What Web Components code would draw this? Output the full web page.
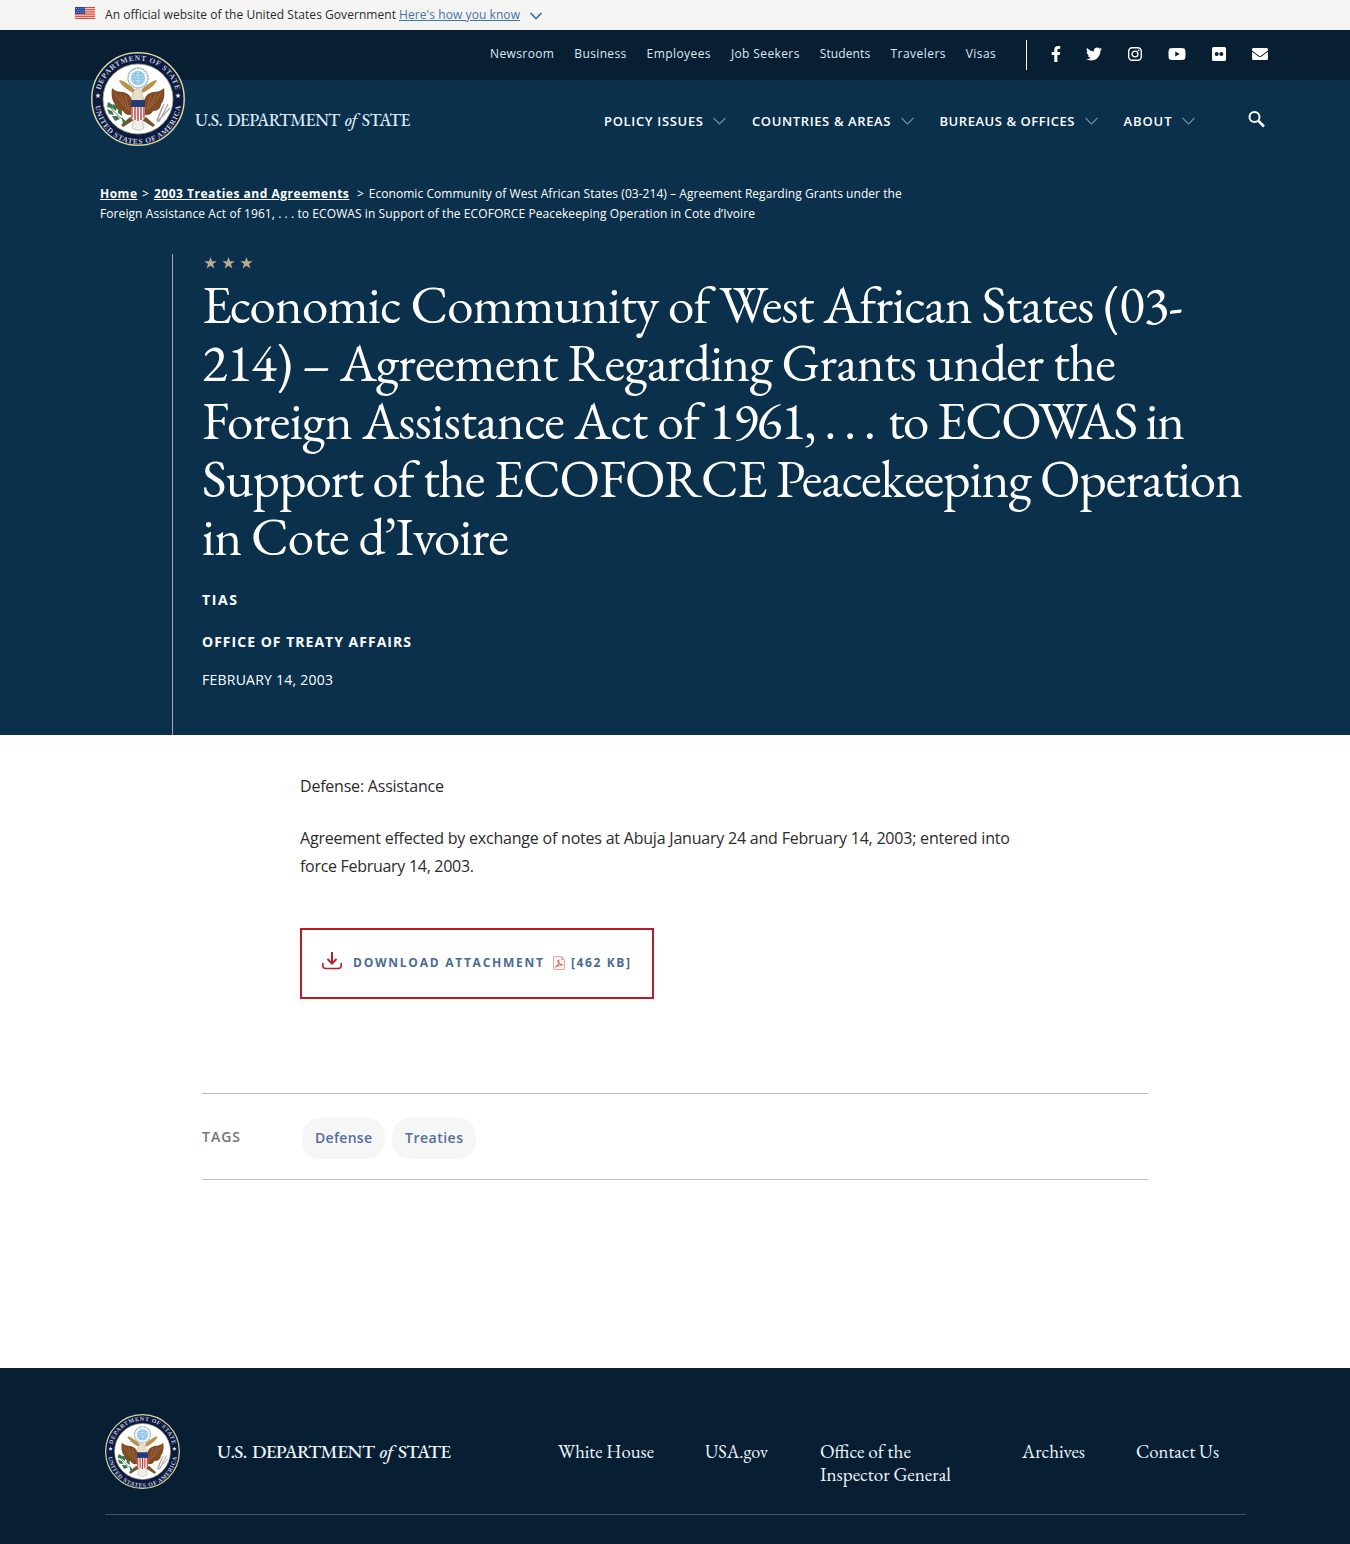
<!DOCTYPE html>
<html lang="en"><head><meta charset="utf-8"><title>Economic Community of West African States (03-214)</title>
<style>
body{margin:0;background:#fff;font-family:"Open Sans","Noto Sans",sans-serif;color:#2b2b2b}
</style></head><body><state-page></state-page>
<script>
const define=(name,html)=>customElements.define(name,class extends HTMLElement{
  constructor(){super();this.attachShadow({mode:'open'}).innerHTML=html}
});

define('gov-banner',`<style>
:host{display:flex;align-items:center;height:30px;background:#f4f4f3;padding-left:75px;font-size:12px;line-height:30px;box-sizing:border-box}
.flag{width:20px;height:12px;margin:-5px 10px 0 0}
a{color:#4773a5;margin-left:3px}a fit-text{text-decoration:underline}
.c{margin:2px 0 0 9px}
</style>
<svg class="flag" viewBox="0 0 20 12"><path fill="#f7ded9" d="M0 0h20v12H0z"/><path stroke="#dc4537" stroke-width="1" d="M0 .5h20M0 2.4h20M0 4.2h20M0 6h20M0 7.8h20M0 9.6h20M0 11.5h20"/><path fill="#2a479d" d="M0 0h10v7H0z"/><path stroke="#9eaede" stroke-width=".8" stroke-dasharray="1 1.2" d="M1 1.5h8M2 3.5h8M1 5.5h8"/></svg>
<fit-text width="291">An official website of the United States Government</fit-text><a href="#"><fit-text width="121">Here's how you know</fit-text></a>
<svg class="c" width="14" height="9" viewBox="0 0 14 9" fill="none" stroke="#3c6898" stroke-width="1.6"><path d="M1.500 1 7 6.500 12.500 1"/></svg>`);

define('dept-seal',`<style>:host{display:block}svg{display:block;width:100%;height:100%}text{font-family:"Liberation Serif",serif;font-weight:bold;font-size:8px;fill:#c3cadb}</style>
<svg viewBox="0 0 94 94">
<defs><path id="up" d="M8.500 47a38.500 38.500 0 0 1 77 0"/><path id="dn" d="M4 49a43 43 0 0 0 86 0"/></defs>
<circle cx="47" cy="47" r="46.200" fill="#0c1c40" stroke="#d8d2a0" stroke-width="1.500"/>
<circle cx="47" cy="47" r="35" fill="#fff" stroke="#a8a681" stroke-width=".8"/>
<text style="font-size:7.500px"><textPath href="#up" startOffset="9" textLength="103">DEPARTMENT OF STATE</textPath></text>
<text style="font-size:7.500px"><textPath href="#dn" startOffset="5" textLength="125">UNITED STATES OF AMERICA</textPath></text>
<path fill="#e8e6cf" d="m7 41 .8 1.700 1.900.1-1.500 1.200.5 1.900L7 45l-1.700.9.5-1.900-1.500-1.200 1.900-.1zM87 41l.8 1.700 1.900.1-1.500 1.200.5 1.900L87 45l-1.700.9.5-1.900-1.500-1.200 1.900-.1z"/>
<circle cx="47" cy="26" r="10" fill="#eef6fb" stroke="#9ba9b5" stroke-width="1.400" stroke-dasharray="2 .7"/>
<circle cx="47" cy="26" r="7" fill="#8ec4e6"/><path stroke="#e9f6fc" stroke-width="1.100" stroke-dasharray="1.300 1.500" d="M42 23h10M40.500 26h13M42 29h10M47 20v12"/>
<path fill="#b9914d" d="M29 28c6 2 11 6 15 10l-2 3c-5-3-10-6-14-12zM65 28c-6 2-11 6-15 10l2 3c5-3 10-6 14-12z"/>
<path fill="#824b24" d="M21 36c3 3 7 4 11 4 5 1 8 4 9 9l1 13c-4 2-8 1-10-3-5 0-8-3-8-7-3-3-4-9-3-16zM73 36c-3 3-7 4-11 4-5 1-8 4-9 9l-1 13c4 2 8 1 10-3 5 0 8-3 8-7 3-3 4-9 3-16z"/>
<path fill="none" stroke="#ba895a" stroke-width=".5" d="M24 41l9 13M29 42l7 15M34 43l4 15M70 41l-9 13M65 42l-7 15M60 43l-4 15"/>
<path fill="#e9dfc9" stroke="#a79b82" stroke-width=".5" d="m41 41 4-4c4 0 6 3 6 6l2 4c-4 3-9 3-13 0l2-5z"/>
<path fill="#75532f" d="m39 65-9 8 2 2 11-7zM55 65l9 8-2 2-11-7z"/>
<path fill="#f1eee7" stroke="#999" stroke-width=".5" d="m43 67-2 9c4 3 8 3 12 0l-2-9z"/>
<path fill="#f8f1ed" d="M40 49h14v15c0 3-4 6-7 6s-7-3-7-6z"/><path stroke="#be3337" stroke-width="1.300" d="M41 54v12M44 54v14M47 54v15M50 54v14M53 54v12"/><path fill="#253b77" d="M40 48h14v7H40z"/>
<path fill="none" stroke="#597c4a" d="M18 52c3 7 9 12 16 17"/><path fill="#39764a" d="m17 50-1 5 5 1 1-3zM22 52l4 2-1 5-4-3zM16 57l5 2 2 4-5-1zM27 57l4 2v5l-4-3zM21 64l5 0 3 3-5 2zM31 65l4 5-3 4z"/>
<path stroke="#a6a7a3" stroke-width="1.200" d="m77 52-9 18M73 52l-7 17M79 56l-13 14M71 56l-5 12"/>
</svg>`);

define('top-bar',`<style>
:host{display:flex;align-items:center;height:50px;background:#081f33;padding-left:490px;font-size:12px;color:#dfe7f1;line-height:48px;box-sizing:border-box}
nav{display:flex;gap:20.300px;margin-top:-3px}
.s{display:flex;align-items:center;border-left:1px solid #fff;height:30px;margin-left:30px;padding-left:24px}
svg{fill:#fff;display:block;margin-top:-2px}
</style>
<nav><fit-text width="64">Newsroom</fit-text><fit-text width="52">Business</fit-text><fit-text width="64">Employees</fit-text><fit-text width="68.500">Job Seekers</fit-text><fit-text width="50.500">Students</fit-text><fit-text width="55">Travelers</fit-text><fit-text width="30">Visas</fit-text></nav>
<div class="s">
<svg width="10" height="16" viewBox="0 0 320 512"><path d="M279.140 288l14.220-92.660h-88.910v-60.130c0-25.350 12.420-50.060 52.240-50.060h40.420V6.260S260.430 0 225.360 0c-73.220 0-121.080 44.380-121.080 124.720v70.620H22.890V288h81.390v224h100.170V288z"/></svg>
<svg style="margin-left:25px" width="16" height="16" viewBox="0 0 512 512"><path d="M459.370 151.716c.325 4.548.325 9.097.325 13.645 0 138.720-105.583 298.558-298.558 298.558-59.452 0-114.680-17.219-161.137-47.106 8.447.974 16.568 1.299 25.340 1.299 49.055 0 94.213-16.568 130.274-44.832-46.132-.975-84.792-31.188-98.112-72.772 6.498.974 12.995 1.624 19.818 1.624 9.421 0 18.843-1.300 27.614-3.573-48.081-9.747-84.143-51.980-84.143-102.985v-1.299c13.969 7.797 30.214 12.670 47.431 13.319-28.264-18.843-46.781-51.005-46.781-87.391 0-19.492 5.197-37.360 14.294-52.954 51.655 63.675 129.300 105.258 216.365 109.807-1.624-7.797-2.599-15.918-2.599-24.040 0-57.828 46.782-104.934 104.934-104.934 30.213 0 57.502 12.670 76.670 33.137 23.715-4.548 46.456-13.320 66.599-25.340-7.798 24.366-24.366 44.833-46.132 57.827 21.117-2.273 41.584-8.122 60.426-16.243-14.292 20.791-32.161 39.308-52.628 54.253z"/></svg>
<svg style="margin-left:25px" width="16" height="16" viewBox="0 0 16 16"><rect x="1.700" y="1.700" width="12.600" height="12.600" rx="3.500" fill="none" stroke="#fff" stroke-width="1.400"/><circle cx="8" cy="8" r="2.900" fill="none" stroke="#fff" stroke-width="1.400"/><circle cx="11.700" cy="4.300" r=".9"/></svg>
<svg style="margin-left:25px" width="18" height="16" viewBox="0 0 576 512"><path d="M549.655 124.083c-6.281-23.650-24.787-42.276-48.284-48.597C458.781 64 288 64 288 64S117.220 64 74.629 75.486c-23.497 6.322-42.003 24.947-48.284 48.597-11.412 42.867-11.412 132.305-11.412 132.305s0 89.438 11.412 132.305c6.281 23.650 24.787 41.500 48.284 47.821C117.220 448 288 448 288 448s170.780 0 213.371-11.486c23.497-6.321 42.003-24.171 48.284-47.821 11.412-42.867 11.412-132.305 11.412-132.305s0-89.438-11.412-132.305zm-317.510 213.508V175.185l142.739 81.205-142.739 81.201z"/></svg>
<svg style="margin-left:26px" width="14" height="14" viewBox="0 0 14 14"><rect width="14" height="14" rx="1.600"/><circle cx="4.700" cy="7" r="2" fill="#081f33"/><circle cx="9.300" cy="7" r="2" fill="#081f33"/></svg>
<svg style="margin-left:26px" width="16" height="16" viewBox="0 0 512 512"><path d="M502.300 190.800c3.900-3.100 9.700-.2 9.700 4.700V400c0 26.500-21.500 48-48 48H48c-26.500 0-48-21.500-48-48V195.600c0-5 5.700-7.800 9.700-4.700 22.400 17.400 52.100 39.500 154.100 113.600 21.100 15.400 56.700 47.800 92.200 47.600 35.700.3 72-32.800 92.300-47.600 102-74.100 131.600-96.300 154-113.700zM256 320c23.200.4 56.600-29.200 73.400-41.400 132.700-96.300 142.800-104.700 173.400-128.700 5.800-4.500 9.200-11.500 9.200-18.900v-19c0-26.500-21.500-48-48-48H48c-26.500 0-48 21.500-48 48v19c0 7.400 3.400 14.300 9.200 18.900 30.600 23.900 40.700 32.400 173.400 128.700 16.800 12.200 50.200 41.800 73.400 41.400z"/></svg>
</div>`);

define('nav-item',`<style>:host{display:flex;align-items:center;gap:10px}svg{display:block}</style><slot></slot><svg width="13" height="8" viewBox="0 0 13 8" fill="none" stroke="#6d91b2" stroke-width="1.100"><path d="m.5 1 6 6 6-6"/></svg>`);

define('main-nav',`<style>
:host{display:flex;height:82px;align-items:center;box-sizing:border-box;padding-left:195px;font-size:13px;font-weight:600;color:#fff;line-height:20px;position:relative}
dept-seal{position:absolute;left:91px;top:-28px;width:94px;height:94px}
nav{display:flex;gap:26px;margin-left:193.500px}
.name{font:500 17.500px/20px "EB Garamond","Liberation Serif",serif;color:#dce8f3;word-spacing:2px;margin-top:-2px}
.q{margin:-4px 0 0 53px}
</style>
<dept-seal></dept-seal><fit-text class="name" width="215.500">U.S. DEPARTMENT <i>of</i> STATE</fit-text>
<nav><nav-item><fit-text width="99">POLICY ISSUES</fit-text></nav-item><nav-item><fit-text width="138.500">COUNTRIES &amp; AREAS</fit-text></nav-item><nav-item><fit-text width="135">BUREAUS &amp; OFFICES</fit-text></nav-item><nav-item><fit-text width="48">ABOUT</fit-text></nav-item></nav>
<svg class="q" width="18" height="18" viewBox="0 0 18 18" fill="none" stroke="#fff"><circle cx="6.500" cy="7" r="5" stroke-width="2"/><path stroke-width="2.500" d="m10 10.500 6 6"/></svg>`);

define('page-hero',`<style>
:host{display:block;height:573px;color:#fff}
.b{padding:22px 0 0 100px;font-size:12px;line-height:20px}
.b div{display:flex}.b a{font-weight:700;color:#fff}.b a fit-text{text-decoration:underline}
.m{margin:30px 0 0 172px;height:481px;border-left:1px solid #a6a7a0;padding-left:29px;box-sizing:border-box}
.st{display:flex;gap:5px;padding:3px 0 0 2px;height:12px}
h1{margin:7px 0 0;font:400 53px/58px "EB Garamond","Liberation Serif",serif}
h1>fit-text{display:block}
.l{display:flex}
.k{font-size:14px;font-weight:700;line-height:20px}
</style>
<div class="b"><div><a href="#"><fit-text width="37">Home</fit-text></a><span style="margin:0 5px">&gt;</span><a href="#"><fit-text width="195">2003 Treaties and Agreements</fit-text></a><span style="margin:0 5px 0 8px">&gt;</span><fit-text width="533">Economic Community of West African States (03-214) – Agreement Regarding Grants under the</fit-text></div>
<fit-text width="655">Foreign Assistance Act of 1961, . . . to ECOWAS in Support of the ECOFORCE Peacekeeping Operation in Cote d’Ivoire</fit-text></div>
<div class="m"><div class="st">${'<svg width="13" height="12" viewBox="0 0 13 12"><path fill="#bda890" d="m6.500 0 1.500 4.200h4.700L9 6.900l1.400 4.600-3.900-2.800-3.900 2.800L4 6.900.3 4.200H5z"/></svg>'.repeat(3)}</div>
<h1><fit-text width="981">Economic Community of West African States (03-</fit-text><fit-text width="914">214) – Agreement Regarding Grants under the</fit-text><span class="l"><fit-text width="498">Foreign Assistance Act of</fit-text> <fit-text width="167" style="margin-left:9px">1961, . . .</fit-text> <fit-text width="297" style="margin-left:12px">to ECOWAS in</fit-text></span><fit-text width="1041">Support of the ECOFORCE Peacekeeping Operation</fit-text><fit-text width="307">in Cote d’Ivoire</fit-text></h1>
<div class="k" style="margin-top:24px"><fit-text width="35">TIAS</fit-text></div>
<div class="k" style="margin-top:22px"><fit-text width="209">OFFICE OF TREATY AFFAIRS</fit-text></div>
<div class="k" style="margin-top:18px;font-weight:400"><fit-text width="131">FEBRUARY 14, 2003</fit-text></div></div>`);

define('download-box',`<style>
:host{display:flex;align-items:flex-start;box-sizing:border-box;width:354px;height:71px;border:2px solid #b91c25;padding:22px 0 0 19px;color:#4a6b91;font-size:12px;font-weight:700;line-height:22px}
</style>
<svg width="22" height="19" viewBox="0 0 22 19" fill="none" stroke="#b9202d" stroke-width="2"><path d="M11 0v11M6.500 7l4.500 4.500L15.500 7" /><path stroke-width="1.600" d="M1.800 11v2.500q0 3 3 3h12.400q3 0 3-3V11"/></svg>
<fit-text style="margin-left:10px" width="190">DOWNLOAD ATTACHMENT</fit-text>
<svg style="margin:4px 6px 0 10px" width="12" height="14" viewBox="0 0 12 14" fill="#fff4ed" stroke="#dfaaa0"><path d="M.5.5h8l3 3v10H.5zM8.500.5v3h3"/><path fill="none" stroke="#b64c3d" stroke-width=".9" d="M2.500 11c3-2 4-5 3-7-2 0 1 5 4 5-2-.5-4 0-7 2"/></svg>
<fit-text width="59">[462 KB]</fit-text>`);

define('tag-pill',`<style>:host{display:block;box-sizing:border-box;height:41px;padding:0 13px;border-radius:18px;background:#f6f6f7;color:#526f9b;font-size:14px;font-weight:600;line-height:39px}</style><slot></slot>`);

define('page-content',`<style>
:host{display:block;height:633px;box-sizing:border-box;padding-top:37px;font-size:16px;line-height:28px}
.t{margin-left:300px}.t p{margin:0 0 24px}.t fit-text{display:block}
download-box{margin-top:48px}
.g{display:flex;align-items:center;margin:94px 202px 0;border:solid #b9bcbe;border-width:1px 0;height:87px;box-sizing:border-box;color:#757575;font-size:14px;font-weight:600}
.g tag-pill{margin-top:3px}
</style>
<div class="t"><p><fit-text width="144">Defense: Assistance</fit-text></p><p><fit-text width="710">Agreement effected by exchange of notes at Abuja January 24 and February 14, 2003; entered into</fit-text><fit-text width="174">force February 14, 2003.</fit-text></p><download-box></download-box></div>
<div class="g"><fit-text width="38">TAGS</fit-text><tag-pill style="margin-left:62px"><fit-text width="57">Defense</fit-text></tag-pill><tag-pill style="margin-left:7px"><fit-text width="58">Treaties</fit-text></tag-pill></div>`);

define('page-footer',`<style>
:host{display:block;height:176px;background:#081f33;box-sizing:border-box;padding:46px 104px 0 105px;color:#eef5fb;font:19px/23px "EB Garamond","Liberation Serif",serif}
.r{display:flex;height:101px;border-bottom:1px solid #3c566b;box-sizing:border-box}
dept-seal{width:75px;height:75px;margin-right:1px}
.n{margin:26px 107px 0 36px;font-weight:500;word-spacing:2px}
.l{margin-top:26px}
.l fit-text{display:block}
</style>
<div class="r"><dept-seal></dept-seal><fit-text class="n" width="234">U.S. DEPARTMENT <i>of</i> STATE</fit-text>
<div class="l"><fit-text width="96" by="size">White House</fit-text></div><div class="l" style="margin-left:51px"><fit-text width="63" by="size">USA.gov</fit-text></div><div class="l" style="margin-left:52px"><fit-text width="91" by="size">Office of the</fit-text><fit-text width="131" by="size">Inspector General</fit-text></div><div class="l" style="margin-left:71px"><fit-text width="63" by="size">Archives</fit-text></div><div class="l" style="margin-left:51px"><fit-text width="83" by="size">Contact Us</fit-text></div></div>`);

define('state-page',`<style>:host{display:block;width:1350px;height:1544px;overflow:hidden}.d{background:#0a304c;height:705px}</style>
<gov-banner></gov-banner><div class="d"><top-bar></top-bar><main-nav></main-nav><page-hero></page-hero></div><page-content></page-content><page-footer></page-footer>`);

// Fits a single line of text to the width in its attribute: by tracking, or
// by type size where by="size" is set, which keeps the ligatures.
customElements.define('fit-text',class extends HTMLElement{
  constructor(){super();this.attachShadow({mode:'open'}).innerHTML='<style>:host{display:inline-block;white-space:nowrap;flex:none}</style><span><slot></slot></span>'}
  connectedCallback(){
    const w=parseFloat(this.getAttribute('width'));if(!w)return;
    const span=this.shadowRoot.querySelector('span');
    if(this.getAttribute('by')==='size'){
      const size=parseFloat(getComputedStyle(this).fontSize);
      this.style.fontSize=size*w/span.getBoundingClientRect().width+'px';
    }else{
      // A vanishing tracking turns ligatures off before the line is measured.
      this.style.letterSpacing='.001px';
      this.style.letterSpacing=(w-span.getBoundingClientRect().width)/(this.textContent.length-1)+'px';
    }
    this.style.width=w+'px';
  }
});
</script></body></html>
